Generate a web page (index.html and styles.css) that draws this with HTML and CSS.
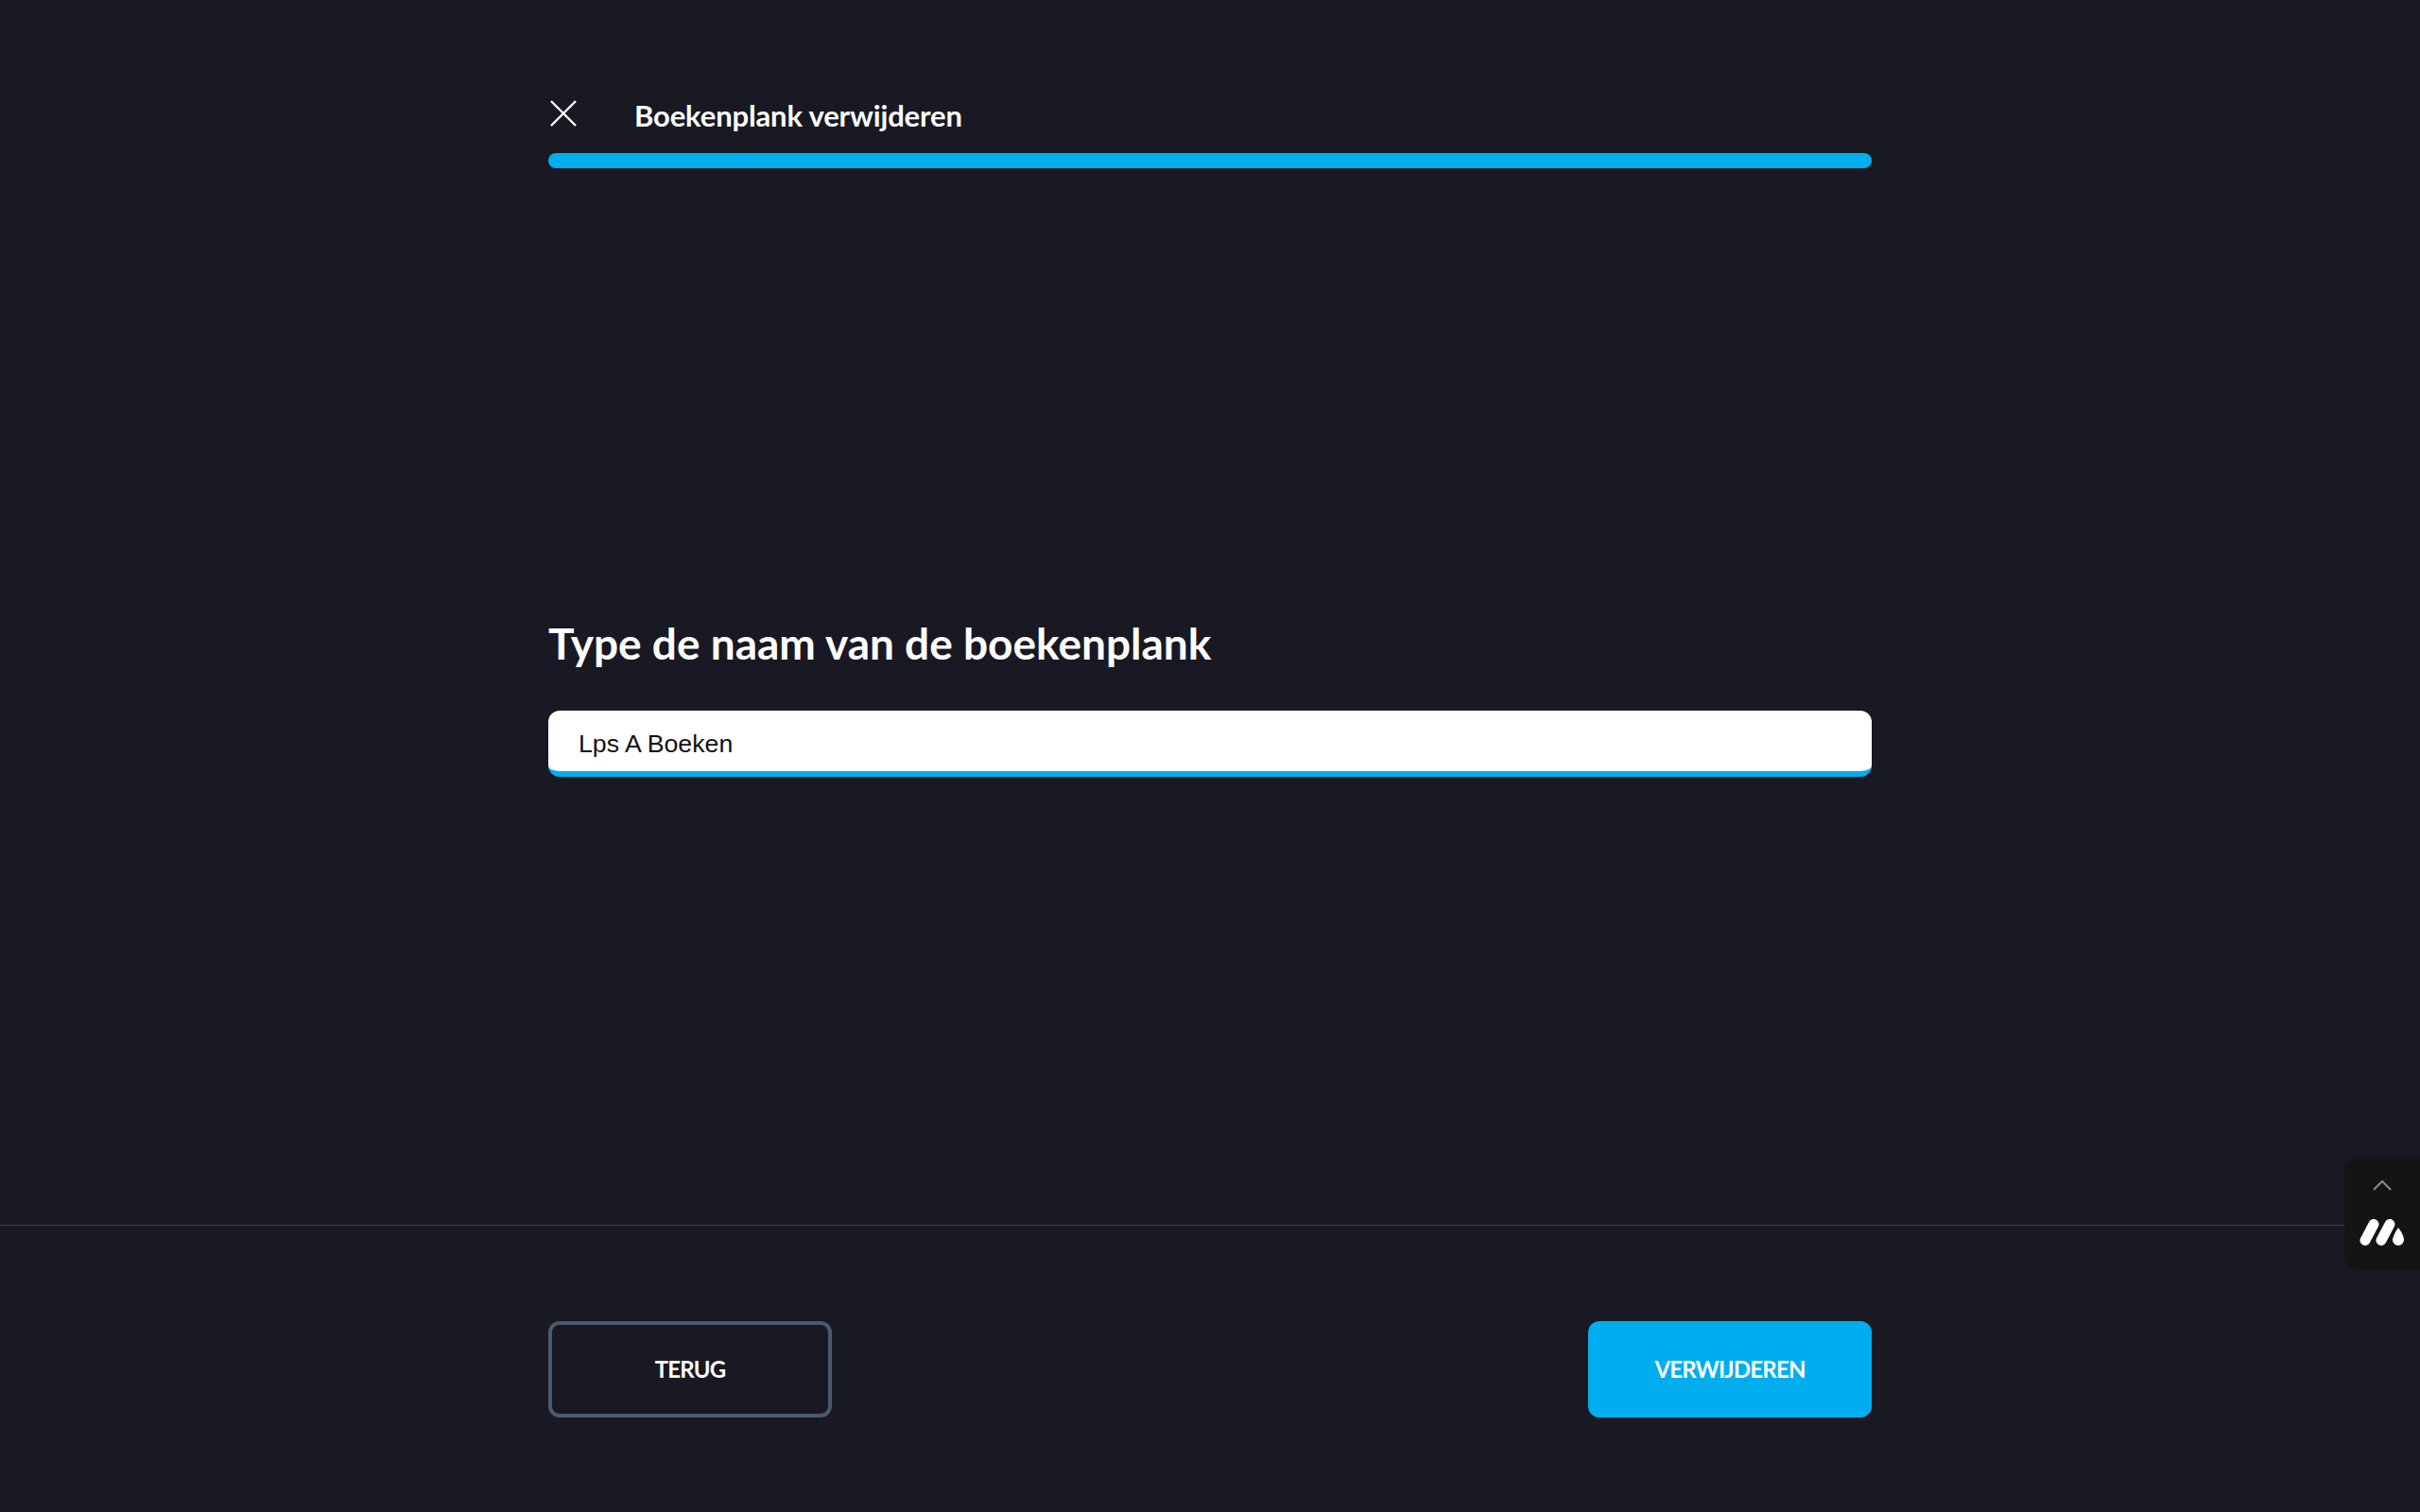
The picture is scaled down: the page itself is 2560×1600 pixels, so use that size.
FILE: index.html
```html
<!DOCTYPE html>
<html lang="nl">
<head>
    <meta charset="UTF-8">
    <title>Boekenplank verwijderen</title>
    <link rel="stylesheet" href="styles.css">
</head>
<body>
    <main class="main-content">
        <header class="top-bar">
            <button class="close-btn" aria-label="Sluiten">
                <svg width="28" height="28" viewBox="0 0 28 28"><path d="M1 1 27 27M27 1 1 27" fill="none" stroke="#fff" stroke-width="2.4"/></svg>
            </button>
            <h1>Boekenplank verwijderen</h1>
        </header>
        <div class="progress"></div>

        <section class="form-part">
            <h2>Type de naam van de boekenplank</h2>
            <input class="name-input" type="text" value="Lps A Boeken">
        </section>
    </main>

    <footer>
        <div class="footer-inner">
            <button class="btn btn-back">TERUG</button>
            <button class="btn btn-delete">VERWIJDEREN</button>
        </div>
    </footer>

    <!-- floating widget, sits over the footer line -->
    <aside class="widget">
        <svg width="20" height="12" viewBox="0 0 20 12"><path d="M1 11 10 2l9 9" fill="none" stroke="#8a8a8a" stroke-width="2"/></svg>
        <svg class="widget-logo" width="48" height="28" viewBox="0 0 48 28">
            <path d="M6 22.5 15 5.5M23 22.5 32 5.5" fill="none" stroke="#fff" stroke-width="11" stroke-linecap="round"/>
            <path d="M41 9c2 3 6 8 6 13a6 6 0 0 1-12 0c0-2 3-9 6-13z" fill="#fff"/>
        </svg>
    </aside>
</body>
</html>
```

FILE: styles.css
```css
html, body {
    height: 100%;
    margin: 0;
}

body {
    background: #181922;
    color: #fff;
    font-family: Lato, "Open Sans", sans-serif;
    display: flex;
    flex-direction: column;
}

.main-content {
    flex: 1;
    width: 1400px;
    margin: 0 auto;
    padding-top: 102px;
    box-sizing: border-box;
}

.top-bar {
    display: flex;
    align-items: center;
    height: 36px;
}

.top-bar h1 {
    margin: 4px 0 0 61px;
    font-size: 31px;
    font-weight: 700;
    line-height: 36px;
    letter-spacing: -0.15px;
}

.close-btn {
    background: none;
    border: none;
    padding: 0;
    margin: 0 0 0 2px;
    width: 28px;
    height: 28px;
}

.progress {
    height: 16px;
    margin-top: 24px;
    background: #00aeef;
    border-radius: 8px;
}

.form-part {
    margin-top: 473px;
}

.form-part h2 {
    margin: 0 0 41px;
    font-size: 46px;
    font-weight: 700;
    line-height: 60px;
}

.name-input {
    display: block;
    width: 100%;
    height: 70px;
    box-sizing: border-box;
    padding: 6px 32px 0;
    border: none;
    border-bottom: 6px solid #00aeef;
    border-radius: 12px;
    background: #fff;
    color: #111;
    font-family: "Liberation Sans", sans-serif;
    font-size: 26.7px;
    outline: none;
}

footer {
    height: 304px;
    box-sizing: border-box;
    border-top: 1px solid #3d3f50;
}

.footer-inner {
    width: 1400px;
    margin: 0 auto;
    padding-top: 101px;
    display: flex;
    justify-content: space-between;
}

.btn {
    width: 300px;
    height: 102px;
    padding: 0 0 2px;
    border-radius: 12px;
    color: #fff;
    font-family: Lato, "Open Sans", sans-serif;
    font-size: 24px;
    font-weight: 700;
    letter-spacing: -0.8px;
}

.btn-back {
    background: transparent;
    border: 4px solid #4b5a6e;
}

.btn-delete {
    background: #00aeef;
    border: none;
}

.widget {
    position: fixed;
    right: 0;
    top: 1224px;
    width: 80px;
    height: 120px;
    background: #131416;
    border-radius: 16px 0 0 16px;
    display: flex;
    flex-direction: column;
    align-items: center;
    padding-top: 24px;
    box-sizing: border-box;
}

.widget-logo {
    margin-top: 30px;
}
```
